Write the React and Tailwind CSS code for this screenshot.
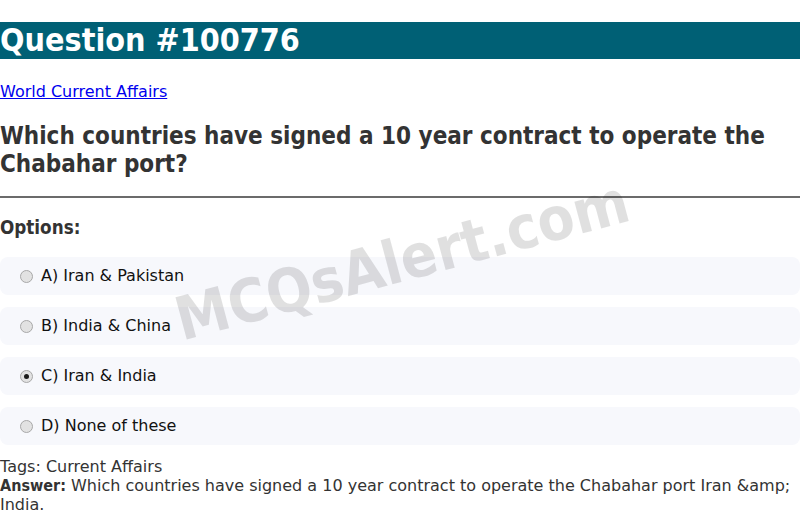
import React from 'react';

const options = [
  { id: 'A', text: 'Iran & Pakistan' },
  { id: 'B', text: 'India & China' },
  { id: 'C', text: 'Iran & India', checked: true },
  { id: 'D', text: 'None of these' },
];

const bold = "font-['DejaVu_Sans_Condensed','DejaVu_Sans',sans-serif] font-bold";

function Radio({ checked }) {
  return (
    <span className="flex h-[13px] w-[13px] shrink-0 items-center justify-center rounded-full border border-[#a8a8a8] bg-[#e2e2e2]">
      {checked && <span className="h-[5px] w-[5px] rounded-full bg-[#1a1a1a]" />}
    </span>
  );
}

export default function App() {
  return (
    <div className="relative overflow-hidden bg-white text-[#333] font-['DejaVu_Sans',sans-serif] text-[16px]">
      {/* title bar */}
      <h1 className={`mt-[22px] bg-[#006075] text-white text-[32px] leading-[37px] ${bold}`}>
        Question #100776
      </h1>

      <p className="mt-[23px] leading-[19px]">
        <a href="#" className="text-[#0000ee] underline">World Current Affairs</a>
      </p>

      <h2 className={`mt-[21px] mb-[18px] text-[24px] leading-[28px] text-[#333] ${bold}`}>
        Which countries have signed a 10 year contract to operate the Chabahar port?
      </h2>

      <hr className="border-t-2 border-[#6b6b6b]" />

      <h3 className={`mt-[19px] mb-[18px] text-[18.7px] leading-[22px] text-[#333] ${bold}`}>Options:</h3>

      {/* options */}
      <div className="flex flex-col gap-3">
        {options.map((o) => (
          <label
            key={o.id}
            className="flex h-[38px] items-center gap-2 rounded-lg bg-[#f7f8fc] px-5 text-[#111]"
          >
            <Radio checked={o.checked} />
            <span className="leading-[18px]">{o.id}) {o.text}</span>
          </label>
        ))}
      </div>

      <div className="mt-3 leading-[19px] text-[#333]">
        <p>Tags: Current Affairs</p>
        <p>
          <b className={bold}>Answer:</b> Which countries have signed a 10 year contract to operate the Chabahar port Iran &amp;amp; India.
        </p>
      </div>

      {/* watermark */}
      <div className={`pointer-events-none absolute left-[402px] top-[260px] -translate-x-1/2 -translate-y-1/2 rotate-[-15deg] whitespace-nowrap text-[60px] text-black/[0.12] ${bold}`}>
        MCQsAlert.com
      </div>
    </div>
  );
}
